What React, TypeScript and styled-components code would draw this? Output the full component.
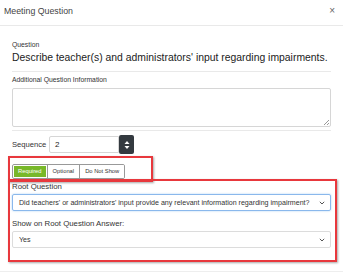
import styled, { createGlobalStyle } from "styled-components";

const GlobalStyle = createGlobalStyle`
  html, body {
    margin: 0;
    padding: 0;
    background: #fff;
  }
  body {
    font-family: "Liberation Sans", Arial, sans-serif;
    color: #333;
  }
`;

const App = () => {
  return (
    <Modal>
      <GlobalStyle />
      <Header>
        <Title>Meeting Question</Title>
        <Close>×</Close>
      </Header>
      <Body>
        <QuestionBlock>
          <SmallLabel>Question</SmallLabel>
          <QuestionText>
            Describe teacher(s) and administrators' input regarding impairments.
          </QuestionText>
        </QuestionBlock>
        <Section>
          <SmallLabel>Additional Question Information</SmallLabel>
          <TextArea />
        </Section>
        <SequenceRow>
          <SeqLabel>Sequence</SeqLabel>
          <SeqInput>2</SeqInput>
          <Spinner>
            <svg width="6" height="10" viewBox="0 0 6 10">
              <path d="M3 1 L5.5 4 H0.5 Z" fill="#fff" />
              <path d="M3 9 L5.5 6 H0.5 Z" fill="#fff" />
            </svg>
          </Spinner>
        </SequenceRow>
        <RedBox $width={145}>
          <ButtonGroup>
            <ToggleButton $active>Required</ToggleButton>
            <ToggleButton>Optional</ToggleButton>
            <ToggleButton>Do Not Show</ToggleButton>
          </ButtonGroup>
        </RedBox>
        <RootBox>
          <FieldLabel>Root Question</FieldLabel>
          <Select $focused>
            <span>
              Did teachers' or administrators' input provide any relevant
              information regarding impairment?
            </span>
            <Caret />
          </Select>
          <FieldLabel>Show on Root Question Answer:</FieldLabel>
          <Select>
            <span>Yes</span>
            <Caret />
          </Select>
        </RootBox>
      </Body>
      <Footer>
        <PrimaryButton />
      </Footer>
    </Modal>
  );
};

const Caret = () => (
  <CaretIcon width="6" height="4" viewBox="0 0 6 4">
    <path d="M0.8 0.8 L3 3 L5.2 0.8" stroke="#555" strokeWidth="1" fill="none" />
  </CaretIcon>
);

const Modal = styled.div`
  width: 343px;
  height: 280px;
  overflow: hidden;
  background: #fff;
`;

const Header = styled.div`
  height: 26px;
  border-bottom: 1px solid #e9e9e9;
  display: flex;
  align-items: center;
  justify-content: space-between;
  padding: 0 8px 0 4px;
  box-sizing: border-box;
`;

const Title = styled.div`
  font-size: 8.8px;
  color: #444;
  margin-top: -4px;
`;

const Close = styled.div`
  font-size: 10px;
  color: #666;
  margin-top: -4px;
`;

const Body = styled.div`
  padding: 0 12px;
`;

const QuestionBlock = styled.div`
  padding-top: 14px;
  border-bottom: 1px solid #e9e9e9;
  padding-bottom: 6px;
`;

const SmallLabel = styled.div`
  font-size: 6.8px;
  line-height: 9px;
  color: #333;
`;

const QuestionText = styled.div`
  font-size: 10.4px;
  line-height: 14px;
  margin-top: 2px;
  color: #222;
  white-space: nowrap;
`;

const Section = styled.div`
  padding-top: 3px;
  padding-bottom: 3px;
  border-bottom: 1px solid #e9e9e9;
`;

const TextArea = styled.div`
  margin-top: 4px;
  height: 37px;
  border: 1px solid #d6d6d6;
  border-radius: 2px;
  position: relative;
  &::after {
    content: "";
    position: absolute;
    right: 1px;
    bottom: 1px;
    width: 5px;
    height: 5px;
    background: linear-gradient(
      135deg,
      transparent 45%,
      #999 45%,
      #999 55%,
      transparent 55%,
      transparent 70%,
      #999 70%,
      #999 80%,
      transparent 80%
    );
  }
`;

const SequenceRow = styled.div`
  display: flex;
  align-items: center;
  margin-top: 4px;
  height: 19px;
`;

const SeqLabel = styled.div`
  font-size: 7.6px;
  width: 37px;
  color: #333;
`;

const SeqInput = styled.div`
  width: 70px;
  height: 17px;
  box-sizing: border-box;
  border: 1px solid #d6d6d6;
  border-radius: 2px 0 0 2px;
  font-size: 8px;
  line-height: 15px;
  padding-left: 5px;
  color: #222;
`;

const Spinner = styled.div`
  width: 15px;
  height: 19px;
  background: #343a40;
  border-radius: 2px;
  display: flex;
  align-items: center;
  justify-content: center;
`;

const RedBox = styled.div<{ $width: number }>`
  width: ${(p) => p.$width}px;
  margin-left: -4px;
  margin-top: 2px;
  border: 2px solid #e8383d;
  box-shadow: 1px 1px 2px rgba(0, 0, 0, 0.35);
  padding: 1px 3px 5px 2px;
  box-sizing: border-box;
  height: 26px;
`;

const ButtonGroup = styled.div`
  display: inline-flex;
  border: 1px solid #999;
  border-radius: 2px;
  overflow: hidden;
  height: 15px;
  box-sizing: border-box;
`;

const ToggleButton = styled.div<{ $active?: boolean }>`
  font-size: 5.8px;
  padding: 0 ${(p) => (p.$active ? 4 : 5)}px;
  line-height: 13px;
  background: ${(p) => (p.$active ? "#78b829" : "#fff")};
  color: ${(p) => (p.$active ? "#fff" : "#333")};
  border-left: 1px solid #999;
  &:first-child {
    border-left: none;
    border: 1px solid #fff;
    line-height: 11px;
  }
`;

const RootBox = styled.div`
  margin: -3px -6px 0 -4px;
  border: 2px solid #e8383d;
  box-shadow: 1px 1px 2px rgba(0, 0, 0, 0.35);
  padding: 0 4px 10px 2px;
  height: 83px;
  box-sizing: border-box;
`;

const FieldLabel = styled.div`
  font-size: 7.8px;
  line-height: 10px;
  margin-top: 1px;
  color: #333;
  & + div {
    margin-top: 2px;
  }
`;

const Select = styled.div<{ $focused?: boolean }>`
  height: 17px;
  box-sizing: border-box;
  border: 1px solid ${(p) => (p.$focused ? "#8ab8ec" : "#dcdcdc")};
  box-shadow: ${(p) => (p.$focused ? "0 0 2px rgba(102,175,233,0.6)" : "none")};
  border-radius: 2px;
  display: flex;
  align-items: center;
  justify-content: space-between;
  padding: 0 5px 0 6px;
  font-size: 7.1px;
  color: #333;
  margin-bottom: 8px;
  white-space: nowrap;
`;

const CaretIcon = styled.svg`
  flex: none;
`;

const Footer = styled.div`
  margin-top: 9px;
  border-top: 1px solid #eee;
  height: 20px;
  display: flex;
  justify-content: flex-end;
  padding: 8px 6px 0 0;
`;

const PrimaryButton = styled.div`
  width: 54px;
  height: 10px;
  background: #1a7cf5;
  border-radius: 2px;
`;

export default App;
